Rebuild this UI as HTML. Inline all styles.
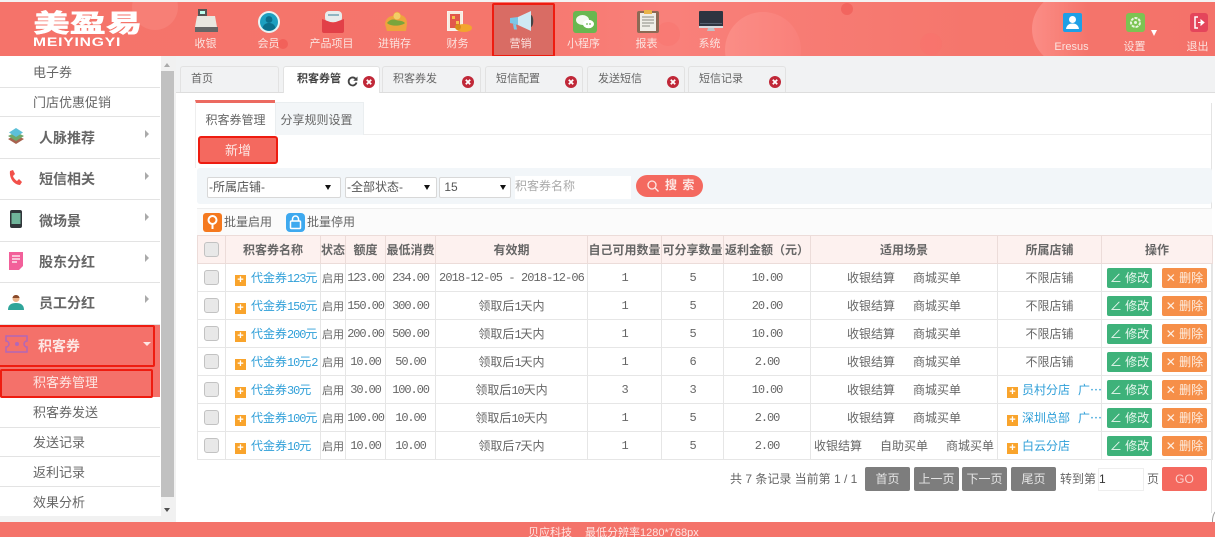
<!DOCTYPE html>
<html lang="zh-CN">
<head>
<meta charset="utf-8">
<title>积客券管理</title>
<style>
*{box-sizing:border-box}
html,body{margin:0;padding:0;width:1215px;height:537px;overflow:hidden;background:#fff}
body{font-family:"Liberation Sans","Noto Sans CJK SC",sans-serif;font-size:12px;color:#666;position:relative}
.a{position:absolute}
.hd{left:0;top:2px;width:1215px;height:54px;background:linear-gradient(90deg,#f5736a 0,#f5766c 40%,#f9807a 55%,#f5766c 80%,#f4726a 100%);overflow:hidden}
.top{left:0;top:0;width:1215px;height:2px;background:#f3f3f3}
.c{position:absolute;border-radius:50%}
.nav{position:absolute;top:36px;width:63px;text-align:center;color:#fbe3df;font-size:11px;line-height:16px}
.ic{position:absolute}
.s{position:absolute;left:0;width:160px;border-bottom:1px solid #e3e3e3;background:#fff;color:#666}
.s13{font-size:13px;padding-left:33px}
.s14{font-size:14px;font-weight:700;padding-left:39px;color:#666}
.arr{position:absolute;left:145px;width:0;height:0;border-left:4px solid #aaa;border-top:4px solid transparent;border-bottom:4px solid transparent}
.tab{position:absolute;top:66px;height:26px;background:#f1f2f3;border:1px solid #e2e2e2;border-bottom:0;border-radius:3px 3px 0 0;line-height:24px;font-size:11px;padding-left:10px;color:#666}
.x{position:absolute;width:12px;height:12px;border-radius:50%;background:#c02838;top:9px}
.x svg{display:block}
table{position:absolute;left:197px;top:235px;width:1015px;border-collapse:collapse;table-layout:fixed;font-size:12px;color:#666}
th,td{border:1px solid #e6e6e6;height:28px;padding:0;text-align:center;white-space:nowrap;overflow:hidden;font-weight:400}
th{background:#fdf1ef;font-weight:700;color:#666;height:28px;border-color:#ecdcd9}
td.l{text-align:left;padding-left:9px}
.n{font-family:"Liberation Mono","Noto Sans CJK SC",monospace;font-size:12px;letter-spacing:-1.1px}
.d{letter-spacing:-.9px}
.st{font-size:11px}
.b{color:#2f9fd8}
.p{display:inline-block;width:11px;height:11px;background:#f9a42c;color:#fff;font:700 11px/11px "Liberation Sans",sans-serif;text-align:center;margin-right:5px;vertical-align:-1px}
.q{margin-right:4px}
.gp{margin-left:8px}
.el{font-family:"Noto Sans CJK SC",sans-serif}
.cb{display:inline-block;width:15px;height:15px;background:#e8e8e8;border:1px solid #c2c2c2;border-radius:3px;vertical-align:middle}
.g+.g{margin-left:18px}
.ed,.de{display:inline-block;width:45px;height:20px;line-height:20px;color:#e8f7ef;border-radius:2px;font-size:12px;vertical-align:middle}
.ed{background:#3eb27a;margin-right:10px}
.de{background:#f68f48;color:#fdeee2}
.sel{position:absolute;top:177px;height:21px;background:#fff;border:1px solid #d8d8d8;border-radius:2px;color:#555;font-size:12px;line-height:19px;padding-left:1px}
.tr{position:absolute;width:0;height:0;border-top:5px solid #111;border-left:3px solid transparent;border-right:3px solid transparent;top:7px}
.pg{position:absolute;top:467px;height:24px;background:#7d7d7d;color:#e6e6e6;border-radius:2px;text-align:center;line-height:24px;font-size:12px}
</style>
</head>
<body>
<div class="a top"></div>
<div class="a hd">
  <div class="c" style="left:132px;top:-18px;width:46px;height:46px;background:#f98a82;opacity:.5"></div>
  <div class="c" style="left:725px;top:10px;width:76px;height:76px;background:linear-gradient(90deg,#fb8d86,#f9807a)"></div>
  <div class="c" style="left:1032px;top:-10px;width:74px;height:74px;background:linear-gradient(90deg,#fb8d86,rgba(251,141,134,0) 75%)"></div>
  <div class="c" style="left:841px;top:1px;width:12px;height:12px;background:#f0605a;opacity:.8"></div>
  <div class="c" style="left:920px;top:31px;width:22px;height:22px;background:#f9716b;opacity:.5"></div>
  <div class="c" style="left:656px;top:20px;width:24px;height:24px;background:#f9716b;opacity:.4"></div>
  <div class="c" style="left:278px;top:37px;width:10px;height:10px;background:#f2615a"></div>
</div>

<div class="a" style="left:33px;top:8px;height:28px;color:#fff;font:900 25px/28px 'Noto Sans CJK SC',sans-serif;white-space:nowrap;transform-origin:left top;transform:scaleX(1.45);text-shadow:.4px 0 0 #fff">美盈易</div>
<div class="a" style="left:33px;top:37px;color:#fff;font:700 11.5px/12px 'Liberation Sans',sans-serif;letter-spacing:.6px;white-space:nowrap;transform-origin:left top;transform:scaleX(1.36)">MEIYINGYI</div>

<div class="a" style="left:492px;top:3px;width:63px;height:54px;background:#d96c64;border:2px solid #ee1c10;border-radius:2px"></div>

<div class="a" style="left:0;top:0;width:1215px;height:56px">
  <div class="nav" style="left:174px">收银</div>
  <div class="nav" style="left:237px">会员</div>
  <div class="nav" style="left:300px">产品项目</div>
  <div class="nav" style="left:363px">进销存</div>
  <div class="nav" style="left:426px">财务</div>
  <div class="nav" style="left:489px">营销</div>
  <div class="nav" style="left:552px">小程序</div>
  <div class="nav" style="left:615px">报表</div>
  <div class="nav" style="left:678px">系统</div>
  <div class="nav" style="left:1040px;top:39px">Eresus</div>
  <div class="nav" style="left:1103px;top:39px">设置</div>
  <div class="nav" style="left:1166px;top:39px">退出</div>

  <svg class="ic" style="left:194px;top:9px" width="25" height="24" viewBox="0 0 25 24"><rect x="4" y="0" width="9" height="7" fill="#555"/><rect x="6" y="2" width="5" height="3" fill="#bfe"/><path d="M3 7h18l2 11H1z" fill="#e9e7e0"/><rect x="1" y="18" width="23" height="5" fill="#666"/></svg>
  <svg class="ic" style="left:258px;top:11px" width="22" height="22" viewBox="0 0 22 22"><circle cx="11" cy="11" r="11" fill="#e8f4f4"/><circle cx="11" cy="11" r="9" fill="#1d9fc0"/><circle cx="11" cy="8.5" r="3.4" fill="#0c6f8c"/><path d="M4.5 17c1-4 4-5 6.500-5s5.500 1 6.500 5a9 9 0 0 1-13 0z" fill="#0c6f8c"/></svg>
  <svg class="ic" style="left:322px;top:10px" width="22" height="23" viewBox="0 0 22 23"><rect x="3" y="1" width="17" height="11" rx="4" fill="#e8ecec"/><rect x="6" y="4" width="11" height="2" fill="#8fb5c2"/><path d="M0 9l11 4 11-4v12a2 2 0 0 1-2 2H2a2 2 0 0 1-2-2z" fill="#e24048"/></svg>
  <svg class="ic" style="left:384px;top:10px" width="24" height="22" viewBox="0 0 24 22"><path d="M1 14C2 7 7 6 9 6c1-5 6-6 8-1 4 1 6 4 6 9l-1 7H3z" fill="#eea43d"/><path d="M3 13c3-4 7-4 9-3s6 0 9 3c-3 3-14 4-18 0z" fill="#7aa53c"/><circle cx="13" cy="6" r="3.500" fill="#f3cd66"/></svg>
  <svg class="ic" style="left:447px;top:11px" width="25" height="22" viewBox="0 0 25 22"><rect x=".5" y=".5" width="15" height="19" fill="#f7ece0" stroke="#f9f3ee"/><rect x="3" y="3" width="10" height="14" fill="#e2574c"/><rect x="5" y="5" width="3" height="3" fill="#f6c04d"/><rect x="9" y="10" width="3" height="3" fill="#f6c04d"/><ellipse cx="17" cy="17" rx="8" ry="4" fill="#f2a52e"/><circle cx="11" cy="16" r="3" fill="#d88c1a"/></svg>
  <svg class="ic" style="left:510px;top:11px" width="25" height="21" viewBox="0 0 25 21"><path d="M0 7l8-1v8l-8-2z" fill="#7cc7e8"/><path d="M8 6l13-6v20L8 14z" fill="#cfe9f4"/><path d="M3 13l3 .5 1 5H4z" fill="#7cc7e8"/><path d="M21 4c3 1 3 11 0 12z" fill="#444"/></svg>
  <svg class="ic" style="left:573px;top:11px" width="24" height="22" viewBox="0 0 24 22"><rect width="24" height="22" rx="3" fill="#69b750"/><ellipse cx="9.500" cy="9" rx="6.500" ry="5" fill="#f4f9f0"/><ellipse cx="15.500" cy="13" rx="5.500" ry="4.300" fill="#fff"/><circle cx="14" cy="13" r=".9" fill="#69b750"/><circle cx="17" cy="13" r=".9" fill="#69b750"/></svg>
  <svg class="ic" style="left:637px;top:10px" width="22" height="23" viewBox="0 0 22 23"><rect y="1" width="22" height="22" rx="2" fill="#8d6a55"/><rect x="3" y="3" width="16" height="18" fill="#efeee7"/><rect x="7" y="0" width="8" height="4" fill="#e9b44a"/><path d="M5 7h12M5 10h12M5 13h12M5 16h8" stroke="#8a8a80" stroke-width="1"/></svg>
  <svg class="ic" style="left:699px;top:11px" width="24" height="21" viewBox="0 0 24 21"><rect width="24" height="16" rx="1" fill="#2e3440"/><rect x="1" y="12" width="22" height="1" fill="#56606f"/><rect x="0" y="15" width="24" height="2" fill="#d7dade"/><path d="M9 17h6l1 3H8z" fill="#bfc3c8"/></svg>

  <svg class="ic" style="left:1063px;top:13px" width="19" height="19" viewBox="0 0 19 19"><rect width="19" height="19" rx="2" fill="#1e9fe6"/><circle cx="9.500" cy="6.500" r="3.500" fill="#fff"/><path d="M3 16c.5-4 3.500-5.500 6.500-5.500s6 1.500 6.500 5.500z" fill="#fff"/></svg>
  <svg class="ic" style="left:1126px;top:13px" width="19" height="19" viewBox="0 0 19 19"><rect width="19" height="19" rx="3" fill="#7cc452"/><circle cx="9.500" cy="9.500" r="4.500" fill="none" stroke="#eaf6e0" stroke-width="2" stroke-dasharray="3 1"/><circle cx="9.500" cy="9.500" r="1.500" fill="#eaf6e0"/></svg>
  <div class="a" style="left:1151px;top:30px;width:0;height:0;border-top:6px solid #fff;border-left:3.500px solid transparent;border-right:3.500px solid transparent"></div>
  <svg class="ic" style="left:1190px;top:13px" width="18" height="19" viewBox="0 0 18 19"><rect width="18" height="19" rx="3" fill="#e4455b"/><path d="M8 4H5v11h3" fill="none" stroke="#fff" stroke-width="1.500"/><path d="M8 9.500h4M11 7l3 2.500-3 2.500z" fill="#fff" stroke="#fff"/></svg>
</div>

<!-- sidebar -->
<div class="a" style="left:0;top:56px;width:176px;height:466px;background:#fff">
</div>
<div class="s s13" style="top:56px;height:32px;line-height:33px">电子券</div>
<div class="s s13" style="top:88px;height:29px;line-height:30px">门店优惠促销</div>
<div class="s s14" style="top:117px;height:42px;line-height:42px">人脉推荐<i class="arr" style="top:13px"></i></div>
<div class="s s14" style="top:159px;height:41px;line-height:40px">短信相关<i class="arr" style="top:13px"></i></div>
<div class="s s14" style="top:200px;height:42px;line-height:42px">微场景<i class="arr" style="top:13px"></i></div>
<div class="s s14" style="top:242px;height:41px;line-height:41px">股东分红<i class="arr" style="top:12px"></i></div>
<div class="s s14" style="top:283px;height:42px;line-height:41px">员工分红<i class="arr" style="top:12px"></i></div>
<div class="a" style="left:0;top:325px;width:160px;height:43px;background:#f4716a"></div>
<div class="a" style="left:-3px;top:325px;width:158px;height:42px;border:2px solid #ee1c10;border-radius:2px"></div>
<div class="a" style="left:38px;top:325px;font-size:14px;font-weight:700;line-height:42px;color:#fde6e3">积客券</div>
<div class="a" style="left:143px;top:342px;width:0;height:0;border-top:4px solid #fde6e3;border-left:4px solid transparent;border-right:4px solid transparent"></div>
<div class="a" style="left:0;top:368px;width:160px;height:29px;background:#f4716a"></div>
<div class="a" style="left:0;top:369px;width:153px;height:29px;border:2px solid #ee1c10;border-radius:2px;color:#fde6e3;font-size:13px;line-height:24px;padding-left:31px">积客券管理</div>
<div class="s s13" style="top:398px;height:30px;line-height:30px">积客券发送</div>
<div class="s s13" style="top:428px;height:29px;line-height:30px">发送记录</div>
<div class="s s13" style="top:457px;height:30px;line-height:31px">返利记录</div>
<div class="s s13" style="top:487px;height:30px;line-height:31px">效果分析</div>

<svg class="ic" style="left:8px;top:128px" width="16" height="17" viewBox="0 0 16 17"><path d="M8 7l8 4-8 5-8-5z" fill="#a8634f"/><path d="M8 4l8 4-8 5-8-5z" fill="#6fa86a"/><path d="M8 0l7 4.500-7 4.500-7-4.500z" fill="#5cc0d8"/></svg>
<svg class="ic" style="left:8px;top:170px" width="15" height="16" viewBox="0 0 15 16"><path d="M2 1l3-1 2 4-2 2c.5 2 2.500 4 4 5l2-2 3 3-2 3c-6 0-11-7-10-14z" fill="#f2504a"/></svg>
<svg class="ic" style="left:10px;top:210px" width="12" height="18" viewBox="0 0 12 18"><rect width="12" height="18" rx="2" fill="#30363a"/><rect x="1.500" y="3" width="9" height="11" fill="#6fb49a"/></svg>
<svg class="ic" style="left:9px;top:252px" width="14" height="18" viewBox="0 0 14 18"><path d="M0 0h14v14l-4 4H0z" fill="#f2609a"/><path d="M3 4h8M3 7h8M3 10h5" stroke="#fff" stroke-width="1.200"/></svg>
<svg class="ic" style="left:8px;top:294px" width="16" height="16" viewBox="0 0 16 16"><circle cx="8" cy="4.500" r="3.500" fill="#eab48a"/><path d="M4.500 4C5 0 11 0 11.500 4z" fill="#8a4a2a"/><path d="M0 16c0-5 3-7 8-7s8 2 8 7z" fill="#2fa59a"/></svg>
<svg class="ic" style="left:5px;top:335px" width="23" height="18" viewBox="0 0 23 18"><path d="M1 1h21v5a3 3 0 0 0 0 6v5H1v-5a3 3 0 0 0 0-6z" fill="none" stroke="#b267b8" stroke-width="1.500"/><circle cx="12" cy="9" r="2" fill="#b267b8"/></svg>

<!-- scrollbar -->
<div class="a" style="left:161px;top:56px;width:15px;height:466px;background:#f1f1f1"></div>
<div class="a" style="left:161px;top:71px;width:13px;height:426px;background:#c1c1c1"></div>
<div class="a" style="left:164px;top:63px;width:0;height:0;border-bottom:4px solid #aaa;border-left:3px solid transparent;border-right:3px solid transparent"></div>
<div class="a" style="left:164px;top:508px;width:0;height:0;border-top:4px solid #505050;border-left:3px solid transparent;border-right:3px solid transparent"></div>
<div class="a" style="left:0;top:516px;width:161px;height:6px;background:#f1f1f1"></div>

<!-- tabs -->
<div class="a" style="left:176px;top:56px;width:1039px;height:37px;background:#f1f2f3;border-bottom:1px solid #ddd"></div>
<div class="tab" style="left:180px;width:99px">首页</div>
<div class="tab" style="left:283px;top:66px;width:97px;height:27px;background:#fff;color:#444;padding-left:13px;font-weight:700">积客券管<svg class="a" style="left:63px;top:9px" width="11" height="11" viewBox="0 0 11 11"><path d="M8.800 3A4 4 0 1 0 9.500 6.500" fill="none" stroke="#444" stroke-width="1.800"/><path d="M10.500 .5v4.200H6.300z" fill="#444"/></svg><i class="x" style="left:79px"><svg width="12" height="12" viewBox="0 0 12 12"><path d="M3.800 3.800l4.400 4.400M8.200 3.800l-4.400 4.400" stroke="#fff" stroke-width="1.800"/></svg></i></div>
<div class="tab" style="left:382px;width:99px">积客券发<i class="x" style="left:79px"><svg width="12" height="12" viewBox="0 0 12 12"><path d="M3.800 3.800l4.400 4.400M8.200 3.800l-4.400 4.400" stroke="#fff" stroke-width="1.800"/></svg></i></div>
<div class="tab" style="left:485px;width:98px">短信配置<i class="x" style="left:79px"><svg width="12" height="12" viewBox="0 0 12 12"><path d="M3.800 3.800l4.400 4.400M8.200 3.800l-4.400 4.400" stroke="#fff" stroke-width="1.800"/></svg></i></div>
<div class="tab" style="left:587px;width:98px">发送短信<i class="x" style="left:79px"><svg width="12" height="12" viewBox="0 0 12 12"><path d="M3.800 3.800l4.400 4.400M8.200 3.800l-4.400 4.400" stroke="#fff" stroke-width="1.800"/></svg></i></div>
<div class="tab" style="left:688px;width:98px">短信记录<i class="x" style="left:80px"><svg width="12" height="12" viewBox="0 0 12 12"><path d="M3.800 3.800l4.400 4.400M8.200 3.800l-4.400 4.400" stroke="#fff" stroke-width="1.800"/></svg></i></div>

<!-- panel -->
<div class="a" style="left:195px;top:134px;width:1017px;height:1px;background:#eee"></div>
<div class="a" style="left:1211px;top:103px;width:1px;height:410px;background:#e4e4e4"></div>
<div class="a" style="left:195px;top:100px;width:80px;height:35px;background:#fff;border-top:3px solid #ec6a60;border-left:1px solid #eee;text-align:center;line-height:35px;font-size:12px;color:#666">积客券管理</div>
<div class="a" style="left:275px;top:102px;width:89px;height:33px;background:#f3f6f8;border:1px solid #eaeef0;border-bottom:0;text-align:center;line-height:34px;font-size:12px;color:#666;padding-right:6px">分享规则设置</div>
<div class="a" style="left:198px;top:136px;width:80px;height:28px;background:#f4695f;border:2px solid #ee1c10;border-radius:3px;color:#fde6e3;text-align:center;line-height:26px;font-size:13px">新增</div>
<div class="a" style="left:195px;top:135px;width:1px;height:33px;background:#eee"></div>

<div class="a" style="left:197px;top:168px;width:1015px;height:36px;background:#f2f6f9;border-radius:3px"></div>
<div class="sel" style="left:207px;width:134px">-所属店铺-<i class="tr" style="left:117px"></i></div>
<div class="sel" style="left:345px;width:92px">-全部状态-<i class="tr" style="left:78px"></i></div>
<div class="sel" style="left:439px;width:72px">&nbsp;15<i class="tr" style="left:60px"></i></div>
<div class="a" style="left:515px;top:176px;width:116px;height:23px;background:#fff;color:#aaa;font-size:12px;line-height:20px">积客券名称</div>
<div class="a" style="left:636px;top:175px;width:67px;height:22px;background:#f4695f;border-radius:11px;color:#fde6e3;line-height:21px;font-size:12px;padding-left:29px;letter-spacing:1px;font-weight:700">搜 索
<svg class="a" style="left:10px;top:4px" width="14" height="14" viewBox="0 0 14 14"><circle cx="6" cy="6" r="4" fill="none" stroke="#fde6e3" stroke-width="1.300"/><path d="M9 9l3.500 3.500" stroke="#fde6e3" stroke-width="1.300"/></svg></div>

<div class="a" style="left:197px;top:208px;width:1015px;height:27px;background:#fbfbfb;border-top:1px solid #eee"></div>
<svg class="ic" style="left:203px;top:213px" width="19" height="19" viewBox="0 0 19 19"><rect width="19" height="19" rx="3" fill="#f5791f"/><circle cx="9.500" cy="7" r="4" fill="none" stroke="#fff" stroke-width="2"/><path d="M9.500 11v5" stroke="#fff" stroke-width="2"/></svg>
<div class="a" style="left:224px;top:214px;line-height:16px;color:#666">批量启用</div>
<svg class="ic" style="left:286px;top:213px" width="19" height="19" viewBox="0 0 19 19"><rect width="19" height="19" rx="4" fill="#3ea9ef"/><rect x="4.500" y="8" width="10" height="7.500" rx="1" fill="none" stroke="#fff" stroke-width="1.500"/><path d="M6.500 8V6a3 3 0 0 1 6 0v2" fill="none" stroke="#fff" stroke-width="1.500"/></svg>
<div class="a" style="left:307px;top:214px;line-height:16px;color:#666">批量停用</div>

<table>
<colgroup><col style="width:28px"><col style="width:95px"><col style="width:25px"><col style="width:40px"><col style="width:50px"><col style="width:152px"><col style="width:74px"><col style="width:62px"><col style="width:87px"><col style="width:187px"><col style="width:104px"><col style="width:111px"></colgroup>
<tr><th><i class="cb"></i></th><th>积客券名称</th><th>状态</th><th>额度</th><th>最低消费</th><th>有效期</th><th>自己可用数量</th><th>可分享数量</th><th>返利金额（元）</th><th>适用场景</th><th>所属店铺</th><th>操作</th></tr>
<tr><td><i class="cb"></i></td><td class="l b"><i class="p">+</i>代金券<span class="n">123</span>元</td><td class="st">启用</td><td class="n">123.00</td><td class="n">234.00</td><td class="n d">2018-12-05 - 2018-12-06</td><td class="n">1</td><td class="n">5</td><td class="n">10.00</td><td><span class="g">收银结算</span><span class="g">商城买单</span></td><td>不限店铺</td><td><span class="ed">∠ 修改</span><span class="de">✕ 删除</span></td></tr>
<tr><td><i class="cb"></i></td><td class="l b"><i class="p">+</i>代金券<span class="n">150</span>元</td><td class="st">启用</td><td class="n">150.00</td><td class="n">300.00</td><td>领取后<span class="n">1</span>天内</td><td class="n">1</td><td class="n">5</td><td class="n">20.00</td><td><span class="g">收银结算</span><span class="g">商城买单</span></td><td>不限店铺</td><td><span class="ed">∠ 修改</span><span class="de">✕ 删除</span></td></tr>
<tr><td><i class="cb"></i></td><td class="l b"><i class="p">+</i>代金券<span class="n">200</span>元</td><td class="st">启用</td><td class="n">200.00</td><td class="n">500.00</td><td>领取后<span class="n">1</span>天内</td><td class="n">1</td><td class="n">5</td><td class="n">10.00</td><td><span class="g">收银结算</span><span class="g">商城买单</span></td><td>不限店铺</td><td><span class="ed">∠ 修改</span><span class="de">✕ 删除</span></td></tr>
<tr><td><i class="cb"></i></td><td class="l b"><i class="p">+</i>代金券<span class="n">10</span>元<span class="n">2</span></td><td class="st">启用</td><td class="n">10.00</td><td class="n">50.00</td><td>领取后<span class="n">1</span>天内</td><td class="n">1</td><td class="n">6</td><td class="n">2.00</td><td><span class="g">收银结算</span><span class="g">商城买单</span></td><td>不限店铺</td><td><span class="ed">∠ 修改</span><span class="de">✕ 删除</span></td></tr>
<tr><td><i class="cb"></i></td><td class="l b"><i class="p">+</i>代金券<span class="n">30</span>元</td><td class="st">启用</td><td class="n">30.00</td><td class="n">100.00</td><td>领取后<span class="n">10</span>天内</td><td class="n">3</td><td class="n">3</td><td class="n">10.00</td><td><span class="g">收银结算</span><span class="g">商城买单</span></td><td class="l b"><i class="p q">+</i>员村分店<span class="gp">广<span class="el">…</span></span></td><td><span class="ed">∠ 修改</span><span class="de">✕ 删除</span></td></tr>
<tr><td><i class="cb"></i></td><td class="l b"><i class="p">+</i>代金券<span class="n">100</span>元</td><td class="st">启用</td><td class="n">100.00</td><td class="n">10.00</td><td>领取后<span class="n">10</span>天内</td><td class="n">1</td><td class="n">5</td><td class="n">2.00</td><td><span class="g">收银结算</span><span class="g">商城买单</span></td><td class="l b"><i class="p q">+</i>深圳总部<span class="gp">广<span class="el">…</span></span></td><td><span class="ed">∠ 修改</span><span class="de">✕ 删除</span></td></tr>
<tr><td><i class="cb"></i></td><td class="l b"><i class="p">+</i>代金券<span class="n">10</span>元</td><td class="st">启用</td><td class="n">10.00</td><td class="n">10.00</td><td>领取后<span class="n">7</span>天内</td><td class="n">1</td><td class="n">5</td><td class="n">2.00</td><td><span class="g">收银结算</span><span class="g">自助买单</span><span class="g">商城买单</span></td><td class="l b"><i class="p q">+</i>白云分店</td><td><span class="ed">∠ 修改</span><span class="de">✕ 删除</span></td></tr>
</table>

<!-- pagination -->
<div class="a" style="left:730px;top:471px;line-height:16px;white-space:nowrap;color:#666">共 7 条记录 当前第 1 / 1</div>
<div class="pg" style="left:865px;width:45px">首页</div>
<div class="pg" style="left:914px;width:45px">上一页</div>
<div class="pg" style="left:962px;width:45px">下一页</div>
<div class="pg" style="left:1011px;width:45px">尾页</div>
<div class="a" style="left:1060px;top:471px;line-height:16px;color:#666">转到第</div>
<div class="a" style="left:1098px;top:468px;width:46px;height:23px;background:#fff;border:1px solid #eee;font-size:12px;line-height:21px;color:#333">1</div>
<div class="a" style="left:1147px;top:471px;line-height:16px;color:#666">页</div>
<div class="pg" style="left:1162px;width:45px;background:#f4695f;color:#fbd0cb">GO</div>

<div class="a" style="left:1212px;top:510px;width:12px;height:22px;border:1px solid #999;border-radius:50%"></div>

<!-- footer -->
<div class="a" style="left:0;top:522px;width:1215px;height:15px;background:#f4736a;color:#fde6e3;font-size:11px;line-height:22px;white-space:nowrap;overflow:hidden"><span class="a" style="left:528px">贝应科技</span><span class="a" style="left:585px">最低分辨率1280*768px</span></div>
</body>
</html>
